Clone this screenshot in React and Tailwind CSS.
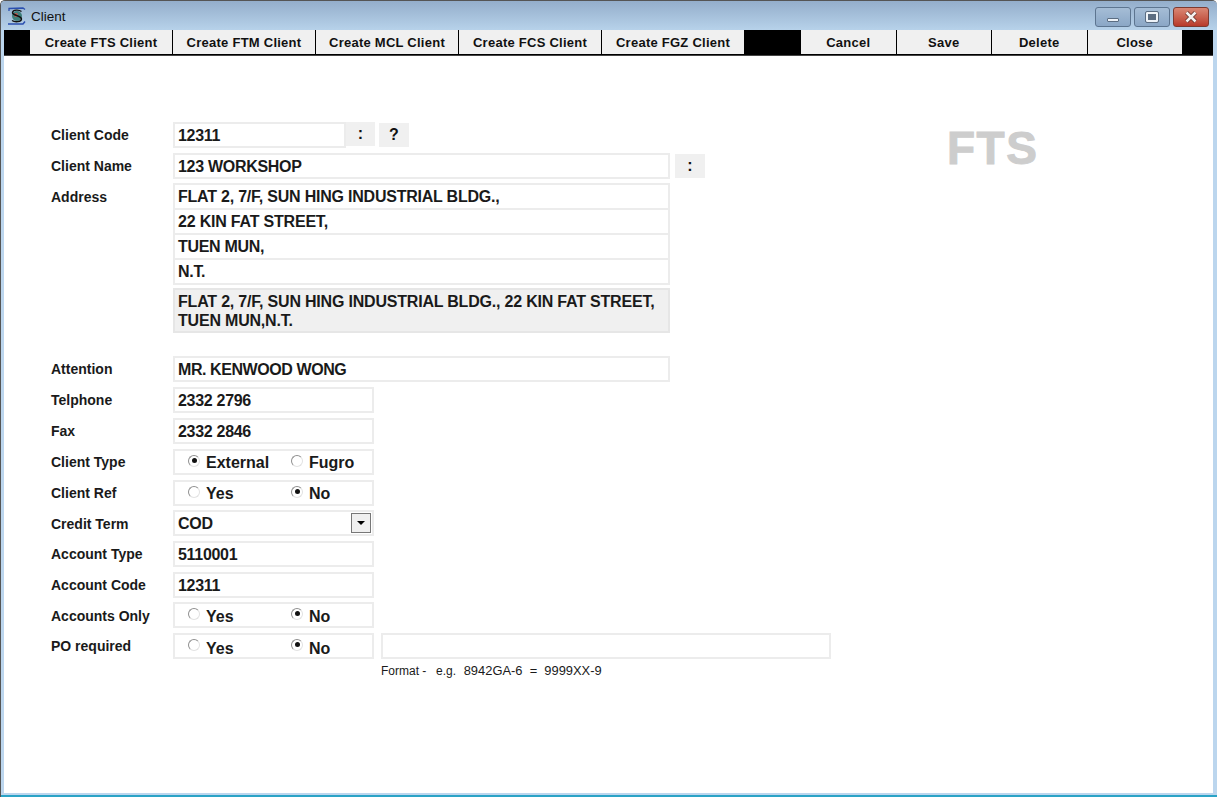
function ToolBtn({ w, children, className = "" }) {
  return (
    <button className={`h-[24px] pt-[1px] shrink-0 bg-[#f0f0f0] text-[13px] font-bold text-[#111] tracking-[0.25px] ${w} ${className}`}>
      {children}
    </button>
  );
}

function Row({ label, className = "", children }) {
  return (
    <div className={`flex items-start ${className}`}>
      <div className="w-[122px] shrink-0 pt-[4px] text-[14px] leading-[18px] font-bold text-[#1a1a1a]">{label}</div>
      {children}
    </div>
  );
}

function Field({ w = "w-[201px]", h = "h-[26px]", pad = "pl-[3px] pt-[1px]", track = "tracking-[-0.3px]", children, className = "" }) {
  return (
    <div className={`${w} ${h} ${pad} ${track} shrink-0 border-2 border-[#ececec] bg-white text-[16px] leading-[22px] font-bold text-[#1a1a1a] whitespace-nowrap ${className}`}>
      {children}
    </div>
  );
}

function Radio({ on }) {
  return (
    <span className="w-[12px] h-[12px] rounded-full border border-[#8f8f8f] border-r-[#e2e2e2] border-b-[#e2e2e2] bg-white shrink-0 mt-[-3px] flex items-center justify-center">
      {on && <span className="w-[5px] h-[5px] rounded-full bg-[#111]" />}
    </span>
  );
}

function RadioField({ a, b, on, textClass = "mt-[2px]" }) {
  return (
    <Field pad="pl-[3px]" track="tracking-normal" className="flex items-center">
      <span className="ml-[10px] w-[103px] flex items-center gap-[6px]"><Radio on={on === 0} /><span className={textClass}>{a}</span></span>
      <span className="flex items-center gap-[6px]"><Radio on={on === 1} /><span className={textClass}>{b}</span></span>
    </Field>
  );
}

function SmallBtn({ children, className = "" }) {
  return <button className={`h-[24px] bg-[#f0f0f0] text-[16px] font-bold text-[#111] leading-[22px] ${className}`}>{children}</button>;
}

function Logo() {
  return (
    <svg width="20" height="20" viewBox="0 0 20 20" fill="none">
      <circle cx="10" cy="10" r="5" fill="#3f7f7a" />
      <circle cx="9" cy="9" r="2" fill="#c7584f" />
      <path d="M14.5 5.5C12 3.5 6 3.5 5.5 6.5C5 9.5 14.5 9.5 14.5 13C14.5 16 8 16.5 5 14.5" stroke="#111" strokeWidth="1.4" />
      <path d="M2 5L2 2.5L16 2L18 3.5" stroke="#2a4fb0" strokeWidth="1.3" />
      <path d="M1 18L16 18L18 15.5" stroke="#2a4fb0" strokeWidth="1.5" />
    </svg>
  );
}

function WinBtn({ className = "", children }) {
  return (
    <div className={`w-[36px] h-[20px] rounded-[3px] border border-[#5d7590] flex items-center justify-center ${className}`}>
      {children}
    </div>
  );
}

export default function App() {
  return (
    <div
      className="w-[1217px] h-[797px] flex flex-col bg-[#bcd6ee] border-l border-t border-[#555] rounded-t-[5px] overflow-hidden"
      style={{ fontFamily: '"Liberation Sans", Arial, sans-serif' }}
    >
      <div className="h-[29px] shrink-0 flex items-center bg-gradient-to-b from-[#94aecb] to-[#b7d2ea] pl-[6px] pr-[4px]">
        <span className="mt-[1px]"><Logo /></span>
        <span className="ml-[4px] mt-[3px] text-[13.5px] text-[#111]">Client</span>
        <div className="ml-auto flex gap-[3px] mt-[2px] mr-[4px]">
          <WinBtn className="bg-gradient-to-b from-[#a5bdd6] to-[#8ba7c6]">
            <span className="w-[12px] h-[4px] mt-[6px] bg-[#eef3f8] border border-[#5b6d82] rounded-[1px]" />
          </WinBtn>
          <WinBtn className="bg-gradient-to-b from-[#a5bdd6] to-[#8ba7c6]">
            <span className="w-[12px] h-[10px] border-2 border-[#eef3f8] outline outline-1 outline-[#5b6d82] bg-[#5b6d82] rounded-[1px]" />
          </WinBtn>
          <WinBtn className="bg-gradient-to-b from-[#d98774] to-[#b8392a] border-[#7d3a30]">
            <svg width="14" height="12" viewBox="0 0 14 12">
              <path d="M2.5 1.5L11.5 10.5M11.5 1.5L2.5 10.5" stroke="#5b2a24" strokeWidth="4" />
              <path d="M2.5 1.5L11.5 10.5M11.5 1.5L2.5 10.5" stroke="#f4f0ee" strokeWidth="2.6" />
            </svg>
          </WinBtn>
        </div>
      </div>

      <div className="flex-1 flex flex-col min-h-0 ml-[3px] mr-[4px] mb-[2px] bg-white">
        <div className="h-[26px] shrink-0 bg-black border-b border-[#444] flex items-start pl-[26px]">
          <div className="flex gap-[1px]">
            <ToolBtn w="w-[142px]">Create FTS Client</ToolBtn>
            <ToolBtn w="w-[142px]">Create FTM Client</ToolBtn>
            <ToolBtn w="w-[142px]">Create MCL Client</ToolBtn>
            <ToolBtn w="w-[142px]">Create FCS Client</ToolBtn>
            <ToolBtn w="w-[142px]">Create FGZ Client</ToolBtn>
          </div>
          <div className="flex gap-[1px] ml-[57px]">
            <ToolBtn w="w-[94.5px]">Cancel</ToolBtn>
            <ToolBtn w="w-[94.5px]">Save</ToolBtn>
            <ToolBtn w="w-[94.5px]">Delete</ToolBtn>
            <ToolBtn w="w-[94.5px]">Close</ToolBtn>
          </div>
        </div>

        <div className="flex-1 flex items-start pl-[47px] pt-[66px]">
          <div className="w-[780px] shrink-0 flex flex-col">
            <Row label="Client Code">
              <Field w="w-[173px]">12311</Field>
              <SmallBtn className="w-[29px]">:</SmallBtn>
              <SmallBtn className="w-[30px] ml-[4px] mt-[1px]">?</SmallBtn>
            </Row>
            <Row label="Client Name" className="mt-[5px]">
              <Field w="w-[497px]">123 WORKSHOP</Field>
              <SmallBtn className="w-[30px] ml-[5px] mt-[1px]">:</SmallBtn>
            </Row>
            <Row label="Address" className="mt-[4px] [&>div:first-child]:pt-[5px]">
              <div className="flex flex-col w-[497px]">
                <Field w="w-full" h="h-[27px]" track="tracking-[-0.22px]">FLAT 2, 7/F, SUN HING INDUSTRIAL BLDG.,</Field>
                <Field w="w-full" h="h-[27px]" track="tracking-[-0.2px]" className="mt-[-2px]">22 KIN FAT STREET,</Field>
                <Field w="w-full" h="h-[27px]" className="mt-[-2px]">TUEN MUN,</Field>
                <Field w="w-full" h="h-[27px]" className="mt-[-2px]">N.T.</Field>
                <div className="mt-[3px] h-[45px] border-2 border-[#e6e6e6] bg-[#f0f0f0] pl-[3px] pt-[2px] text-[16px] tracking-[-0.2px] leading-[19px] font-bold text-[#1a1a1a]">
                  FLAT 2, 7/F, SUN HING INDUSTRIAL BLDG., 22 KIN FAT STREET,<br />TUEN MUN,N.T.
                </div>
              </div>
            </Row>
            <Row label="Attention" className="mt-[23px]">
              <Field w="w-[497px]" track="tracking-[-0.42px]">MR. KENWOOD WONG</Field>
            </Row>
            <Row label="Telphone" className="mt-[5px]"><Field>2332 2796</Field></Row>
            <Row label="Fax" className="mt-[5px]"><Field>2332 2846</Field></Row>
            <Row label="Client Type" className="mt-[5px]"><RadioField a="External" b="Fugro" on={0} /></Row>
            <Row label="Client Ref" className="mt-[5px]"><RadioField a="Yes" b="No" on={1} /></Row>
            <Row label="Credit Term" className="mt-[4px] [&>div:first-child]:pt-[5px]">
              <Field className="relative">
                COD
                <span className="absolute right-[1px] top-[1px] w-[20px] h-[20px] border border-[#777] bg-[#efefef] flex items-center justify-center">
                  <span className="w-0 h-0 border-l-[4px] border-r-[4px] border-t-[4px] border-l-transparent border-r-transparent border-t-black" />
                </span>
              </Field>
            </Row>
            <Row label="Account Type" className="mt-[5px]"><Field>5110001</Field></Row>
            <Row label="Account Code" className="mt-[5px]"><Field>12311</Field></Row>
            <Row label="Accounts Only" className="mt-[4px] [&>div:first-child]:pt-[5px]"><RadioField a="Yes" b="No" on={1} textClass="mt-[3px]" /></Row>
            <Row label="PO required" className="mt-[5px]">
              <RadioField a="Yes" b="No" on={1} textClass="mt-[6px]" />
              <div className="ml-[7px] flex flex-col">
                <Field w="w-[450px]" />
                <div className="mt-[4px] text-[12px] leading-[16px] text-[#1a1a1a] whitespace-pre">Format -  <span className="ml-[3px]">e.g.</span>  <span className="ml-[1px] text-[12.9px]">8942GA-6  =  9999XX-9</span></div>
              </div>
            </Row>
          </div>
          <div className="ml-[116px] mt-[1px] text-[46px] leading-[50px] font-bold text-[#cdcdcd] tracking-[1.5px] [-webkit-text-stroke:1px_#cdcdcd]">FTS</div>
        </div>
      </div>
      <div className="h-[2px] shrink-0 bg-[#2aa3c6]" />
    </div>
  );
}
